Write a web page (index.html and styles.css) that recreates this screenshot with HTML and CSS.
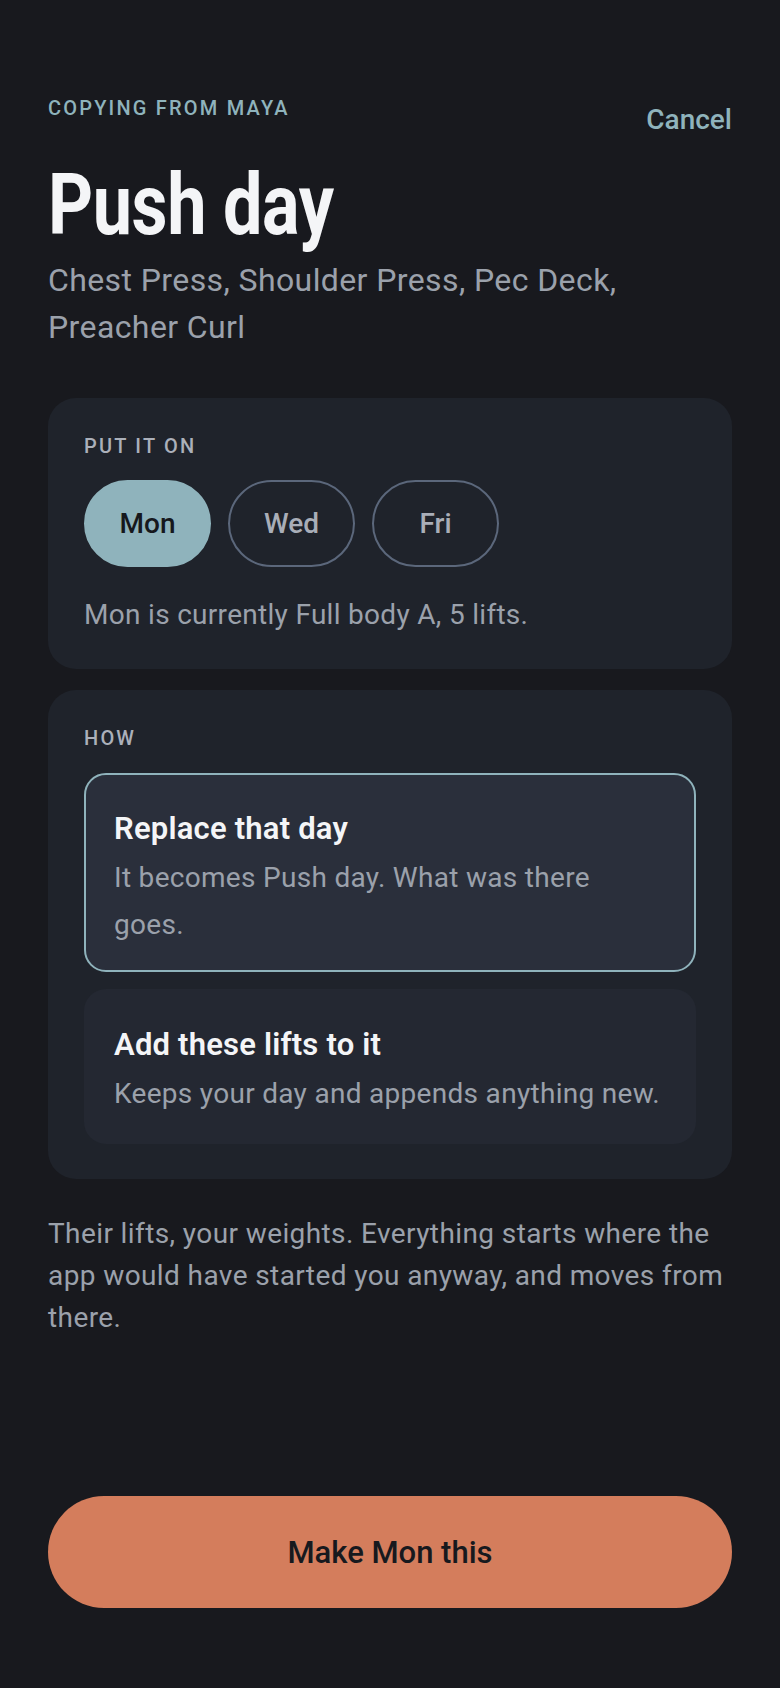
FILE: index.html
```html
<!DOCTYPE html>
<html lang="en">
<head>
<meta charset="utf-8">
<meta name="viewport" content="width=device-width, initial-scale=1">
<title>Push day</title>
<link rel="stylesheet" href="styles.css">
</head>
<body>
<main class="screen">
  <header class="top">
    <div class="eyebrow">COPYING FROM MAYA</div>
    <a class="cancel" href="#">Cancel</a>
  </header>
  <h1 class="title"><span class="title-text">Push day</span></h1>
  <p class="subtitle">Chest Press, Shoulder Press, Pec Deck, Preacher Curl</p>

  <section class="card card-days">
    <div class="label">PUT IT ON</div>
    <div class="pills">
      <button class="pill pill-active">Mon</button>
      <button class="pill">Wed</button>
      <button class="pill">Fri</button>
    </div>
    <p class="note">Mon is currently Full body A, 5 lifts.</p>
  </section>

  <section class="card card-how">
    <div class="label">HOW</div>
    <div class="options">
      <div class="option option-selected">
        <div class="option-title">Replace that day</div>
        <div class="option-desc option-desc-narrow">It becomes Push day. What was there goes.</div>
      </div>
      <div class="option">
        <div class="option-title">Add these lifts to it</div>
        <div class="option-desc">Keeps your day and appends anything new.</div>
      </div>
    </div>
  </section>

  <p class="footnote">Their lifts, your weights. Everything starts where the app would have started you anyway, and moves from there.</p>

  <button class="cta">Make Mon this</button>
</main>
</body>
</html>
```

FILE: styles.css
```css
* { box-sizing: border-box; }
html, body { margin: 0; padding: 0; }
body {
  background: #18191e;
  font-family: Roboto, "Noto Sans", sans-serif;
  color: #f4f5f7;
}
.screen {
  min-height: 1688px;
  padding: 96px 48px 80px;
  display: flex;
  flex-direction: column;
}
.top {
  display: flex;
  justify-content: space-between;
  align-items: flex-start;
}
.eyebrow {
  font-size: 20px;
  line-height: 24px;
  font-weight: 500;
  letter-spacing: 2.2px;
  color: #8fb3bc;
}
.cancel {
  margin-top: 8px;
  font-size: 28px;
  line-height: 32px;
  font-weight: 500;
  color: #8fb3bc;
  text-decoration: none;
}
.title {
  margin: 24px 0 0;
  font-size: 86px;
  line-height: 90px;
  font-weight: 700;
  color: #f4f5f7;
  white-space: nowrap;
}
.title-text {
  display: inline-block;
  transform: scaleX(0.815);
  transform-origin: left center;
  letter-spacing: -0.5px;
}
.subtitle {
  margin: 7px 0 0;
  font-size: 32px;
  line-height: 47px;
  letter-spacing: 0.4px;
  color: #9ba1ab;
  max-width: 600px;
}
.card {
  background: #1f232b;
  border-radius: 28px;
  padding: 36px 36px 35px;
}
.card-days { margin-top: 47px; }
.card-how { margin-top: 21px; }
.label {
  font-size: 20px;
  line-height: 24px;
  font-weight: 500;
  letter-spacing: 2.2px;
  color: #abb0ba;
}
.pills {
  display: flex;
  gap: 17px;
  margin-top: 22px;
}
.pill {
  width: 127px;
  height: 87px;
  border-radius: 999px;
  border: 2px solid #5b677b;
  background: transparent;
  color: #a9aeb8;
  font-family: inherit;
  font-size: 28px;
  font-weight: 500;
  padding: 0;
}
.pill-active {
  background: #8fb3bc;
  border-color: #8fb3bc;
  color: #16181d;
}
.note {
  margin: 27px 0 0;
  font-size: 28px;
  line-height: 42px;
  letter-spacing: 0.3px;
  color: #9ba1ab;
}
.card-days { padding-bottom: 33px; }
.options {
  display: flex;
  flex-direction: column;
  gap: 17px;
  margin-top: 23px;
}
.option {
  background: #242832;
  border: 2px solid transparent;
  border-radius: 22px;
  padding: 36px 28px 25px;
}
.option-selected {
  background: #2a2f3b;
  border-color: #8fb3bc;
  padding-bottom: 22px;
}
.option-title {
  font-size: 31px;
  line-height: 36px;
  font-weight: 600;
  letter-spacing: 0.2px;
  color: #f4f5f7;
}
.option-desc {
  margin-top: 7px;
  font-size: 28px;
  line-height: 47px;
  letter-spacing: 0.3px;
  color: #9ba1ab;
}
.option-desc-narrow { max-width: 500px; }
.footnote {
  margin: 34px 0 0;
  font-size: 28px;
  line-height: 42px;
  letter-spacing: 0.4px;
  color: #9ba1ab;
}
.cta {
  margin-top: auto;
  height: 112px;
  width: 100%;
  border: 0;
  border-radius: 999px;
  background: #d47d5c;
  color: #17191e;
  font-family: inherit;
  font-size: 31px;
  font-weight: 500;
}
```
